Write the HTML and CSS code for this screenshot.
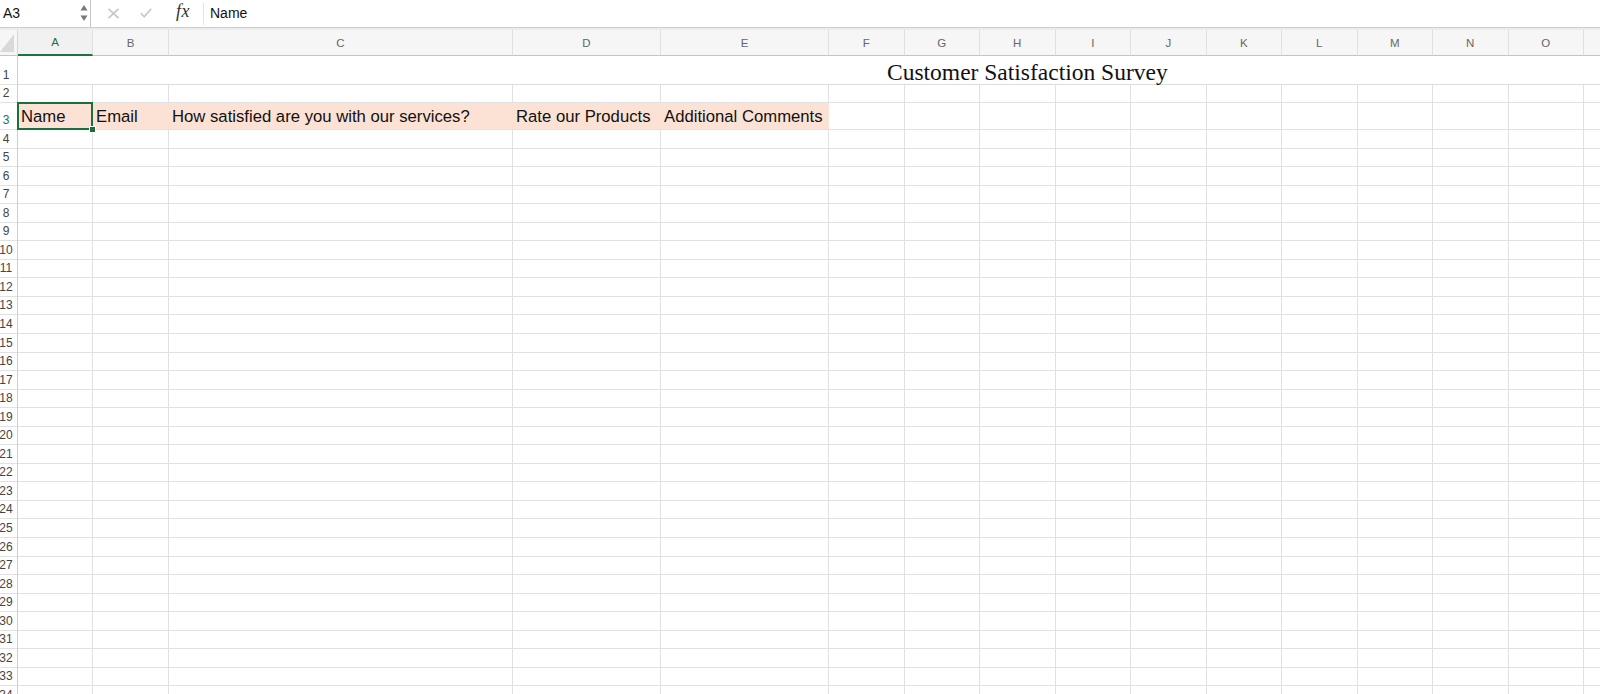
FILE: index.html
```html
<!DOCTYPE html>
<html>
<head>
	<meta charset="utf-8">
	<link rel="stylesheet" href="styles.css">
</head>
<body>

	<!--
		Formula bar
	-->
	<div id='formulaBar'>
		<div class='nameBox'>
			<span class='nameText'>A3</span>
			<span class='spinner'>
				<svg width='8' height='18' viewBox='0 0 8 18'><path d='M4 1 L7.5 6.5 L0.5 6.5 Z' fill='#7a7a7a'/><path d='M4 17 L7.5 11.5 L0.5 11.5 Z' fill='#7a7a7a'/></svg>
			</span>
		</div>
		<div class='barButtons'>
			<svg class='cancel' width='13' height='11' viewBox='0 0 13 11'><path d='M1.5 0.8 L11.5 10.2 M11.5 0.8 L1.5 10.2' stroke='#c6c6c6' stroke-width='1.6' fill='none'/></svg>
			<svg class='enter' width='12' height='10' viewBox='0 0 12 10'><path d='M0.8 5.2 L4.2 8.8 L11.2 0.8' stroke='#c6c6c6' stroke-width='1.6' fill='none'/></svg>
			<span class='fx'>fx</span>
		</div>
		<div class='formula'>Name</div>
	</div>
	<div class='barShadow'></div>

	<div id='sheet'></div>

	<script>
		var cols = 'ABCDEFGHIJKLMNOP'.split('')
		var headers = ['Name', 'Email', 'How satisfied are you with our services?', 'Rate our Products', 'Additional Comments']
		var sheet = document.getElementById('sheet')

		function	cell(cls, text)
		{
			var n = document.createElement('div')
			n.className = cls
			if (text != undefined) n.innerHTML = '<span>' + text + '</span>'
			sheet.appendChild(n)
			return	n
		}

		//
		// Column headers (P is only partly on screen, its letter is off the edge)
		//
		cell('corner')
		for (var i = 0; i < cols.length; i++)
		{
			if (cols[i] == 'P') cell('colHead')
			else cell('colHead' + (cols[i] == 'A' ? ' active' : ''), cols[i])
		}

		//
		// Row 1 : merged title
		//
		cell('rowHead', 1)
		cell('title', 'Customer Satisfaction Survey')

		//
		// Rows 2 ..
		//
		for (var r = 2; r <= 34; r++)
		{
			cell('rowHead' + (r == 3 ? ' active' : ''), r)
			for (var i = 0; i < cols.length; i++)
			{
				if (r == 3 && i < headers.length)
				{
					var c = cell('cell heading' + (i == 0 ? ' selected' : ''), headers[i])
					if (i == 0) c.innerHTML += '<div class="handle"></div>'
				}
				else
					cell('cell')
			}
		}
	</script>

</body>
</html>
```

FILE: styles.css
```css
body
{
	margin: 0;
	padding: 0;
	background-color: white;
	font-family: "Liberation Sans", Arial, sans-serif;
	color: #222;
	overflow: hidden;
	height: 694px;
}


/*
	Formula bar
*/
#formulaBar
{
	display: flex;
	align-items: center;
	height: 27px;
	border-bottom: 1px solid #cdcdcd;
}
.nameBox
{
	display: flex;
	align-items: center;
	justify-content: space-between;
	width: 91px;
	height: 27px;
	padding-left: 3px;
	border-right: 1px solid #c4c4c4;
	box-sizing: border-box;
}
.nameText
{
	font-size: 14px;
	color: #111;
	margin-top: -2px;
}
.spinner
{
	display: flex;
	margin-right: 2px;
	margin-top: -1px;
}
.barButtons
{
	display: flex;
	align-items: center;
	width: 112px;
	height: 22px;
	border-right: 1px solid #e3e3e3;
}
.cancel
{
	margin-left: 16px;
	margin-top: -1px;
}
.enter
{
	margin-left: 20px;
	margin-top: -1px;
}
.fx
{
	margin-left: 24px;
	font-family: "Liberation Serif", "Times New Roman", serif;
	font-style: italic;
	font-size: 18px;
	color: #333;
	margin-top: -4px;
	letter-spacing: 0.5px;
}
.formula
{
	padding-left: 6px;
	font-size: 14px;
	color: #111;
	margin-top: -2px;
}
.barShadow
{
	height: 2px;
	background-color: #ececec;
}


/*
	Sheet grid
*/
#sheet
{
	display: grid;
	grid-template-columns: 18px 75px 76px 344px 148px 168px repeat(11, 75.5px);
	grid-template-rows: 26px 29px 18px 27px repeat(31, 18.55px);
}
#sheet > div
{
	box-sizing: border-box;
	min-width: 0;
}
.corner
{
	position: relative;
	background-color: #f6f6f6;
	border-right: 1px solid #d6d6d6;
	border-bottom: 1px solid #c4c4c4;
}
.corner:after
{
	content: '';
	position: absolute;
	right: 3px;
	bottom: 3px;
	width: 0;
	height: 0;
	border-left: 14px solid transparent;
	border-bottom: 18px solid #d9d9d9;
}
.colHead
{
	display: flex;
	align-items: center;
	justify-content: center;
	background-color: #f6f6f6;
	border-right: 1px solid #e0e0e0;
	border-bottom: 1px solid #c4c4c4;
	font-size: 11.5px;
	color: #666;
}
.colHead.active
{
	color: #1b7343;
	border-bottom: 2px solid #1b7343;
	background-color: #f1f1f1;
}
.rowHead
{
	display: flex;
	align-items: flex-end;
	justify-content: center;
	padding-right: 5px;
	line-height: 18px;
	font-size: 12px;
	color: #444;
	border-right: 1px solid #cdcdcd;
	border-bottom: 1px solid #e1e1e1;
	overflow: hidden;
	white-space: nowrap;
}
.rowHead.active
{
	color: #1b7343;
}
.title
{
	grid-column: span 16;
	display: flex;
	align-items: flex-end;
	padding-left: 869px;
	border-bottom: 1px solid #dcdcdc;
	font-family: "Liberation Serif", "Times New Roman", serif;
	font-size: 23.5px;
	line-height: 24px;
	color: #111;
	white-space: nowrap;
}
.cell
{
	border-right: 1px solid #e1e1e1;
	border-bottom: 1px solid #e1e1e1;
}


/*
	Header row (row 3)
*/
.heading
{
	position: relative;
	display: flex;
	align-items: center;
	padding-left: 3px;
	padding-top: 2px;
	background-color: #fbe2d5;
	border-right-color: #fbe2d5;
	font-size: 16.7px;
	color: #111;
	white-space: nowrap;
}
.selected:after
{
	content: '';
	position: absolute;
	left: -1px;
	top: -1px;
	right: -1px;
	bottom: -1px;
	border: 2px solid #1b6e3e;
}
.handle
{
	position: absolute;
	right: -4px;
	bottom: -4px;
	width: 5px;
	height: 5px;
	background-color: #1b6e3e;
	border: 1px solid white;
	z-index: 2;
}
```
